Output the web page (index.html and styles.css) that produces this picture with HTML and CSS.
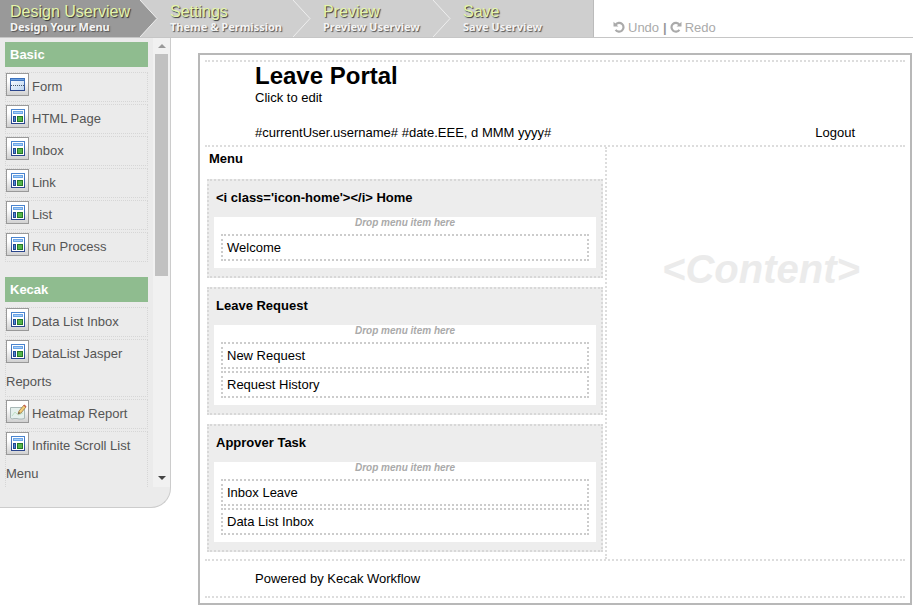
FILE: index.html
```html
<!DOCTYPE html>
<html lang="en">
<head>
<meta charset="utf-8">
<title>Userview Builder</title>
<link rel="stylesheet" href="styles.css">
</head>
<body>
<svg class="defs" width="0" height="0">
  <defs>
    <linearGradient id="tile" x1="0" y1="0" x2="0" y2="1"><stop offset="0.35" stop-color="#fff"/><stop offset="1" stop-color="#cfcfcf"/></linearGradient>
    <linearGradient id="frame" x1="0" y1="0" x2="0" y2="1"><stop offset="0" stop-color="#4b85cf"/><stop offset="1" stop-color="#2a458c"/></linearGradient>
    <linearGradient id="pale" x1="0" y1="0" x2="1" y2="1"><stop offset="0" stop-color="#fff"/><stop offset="1" stop-color="#b9d3f0"/></linearGradient>
  </defs>
  <symbol id="page" viewBox="0 0 23 23">
    <rect x=".5" y=".5" width="22" height="22" fill="url(#tile)" stroke="#999"/>
    <rect x="5.5" y="4.5" width="13" height="14" fill="#fff" stroke="url(#frame)"/>
    <rect x="7" y="6" width="10" height="3" fill="#6aa5e8"/><rect x="8" y="7" width="8" height="1" fill="#a5cdf7"/>
    <rect x="7" y="11" width="3" height="6" fill="#24488f"/><rect x="8" y="12" width="1" height="4" fill="#4a87d2"/>
    <rect x="11" y="11" width="6" height="6" fill="#24772a"/><rect x="12" y="12" width="4" height="4" fill="#55b549"/>
  </symbol>
  <symbol id="form" viewBox="0 0 23 23">
    <rect x=".5" y=".5" width="22" height="22" fill="url(#tile)" stroke="#999"/>
    <rect x="4.5" y="5.5" width="14" height="12" fill="url(#pale)" stroke="url(#frame)"/>
    <rect x="4" y="5" width="15" height="3" fill="#3b71bd"/><rect x="5" y="6" width="13" height="1" fill="#6da1df"/>
    <path d="M5 12.5H18" stroke="#456" stroke-dasharray="1 1"/>
  </symbol>
  <symbol id="map" viewBox="0 0 23 23">
    <rect x=".5" y=".5" width="22" height="22" fill="url(#tile)" stroke="#999"/>
    <path d="M4.5 7.5H18.5V18.5L16 19H13L11 18.5H8L6 19L4.5 18Z" fill="#e5f0ed" stroke="#a9b8b7"/>
    <path d="M6 16L9 12L12 15L17 13" fill="none" stroke="#bfe0c5"/>
    <path d="M12 14L13 11L18 5L20 7L15 13Z" fill="#f3cf78" stroke="#9a7945" stroke-width=".8"/>
    <path d="M18 5L20 7" stroke="#c65b4e" stroke-width="1.5"/><path d="M12 14L13 12L14 13Z" fill="#444"/>
  </symbol>
  <symbol id="turn" viewBox="0 0 12 12">
    <path d="M2.6 3.6A4.4 4.4 0 1 1 2.6 8.9" fill="none" stroke="#aaa" stroke-width="2.2"/>
    <path d="M.5 .8V5.5H5.4Z" fill="#aaa"/>
  </symbol>
</svg>
<header class="topbar">
  <nav class="steps">
    <a class="step active"><b>Design Userview</b><small>Design Your Menu</small><svg class="arrow" viewBox="0 0 20 37"><path d="M0 0L17 18.5L0 37Z" fill="#999"/><path d="M0 0L17 18.5L0 37" fill="none" stroke="#eee"/></svg></a>
    <a class="step theme"><b>Settings</b><small>Theme &amp; Permission</small><svg class="arrow" viewBox="0 0 20 37"><path d="M0 0L17 18.5L0 37" fill="none" stroke="#eee"/></svg></a>
    <a class="step preview"><b>Preview</b><small>Preview Userview</small><svg class="arrow" viewBox="0 0 20 37"><path d="M0 0L17 18.5L0 37" fill="none" stroke="#eee"/></svg></a>
    <a class="step save"><b>Save</b><small>Save Userview</small></a>
  </nav>
  <div class="history"><svg class="turn"><use href="#turn"/></svg><span class="undo">Undo</span><span class="bar">|</span><svg class="turn redo"><use href="#turn"/></svg><span>Redo</span></div>
</header>
<div class="workspace">
  <aside class="palette">
    <div class="scroller">
      <div class="list">
        <h2>Basic</h2>
        <div class="tool"><svg><use href="#form"/></svg>Form</div>
        <div class="tool"><svg><use href="#page"/></svg>HTML Page</div>
        <div class="tool"><svg><use href="#page"/></svg>Inbox</div>
        <div class="tool"><svg><use href="#page"/></svg>Link</div>
        <div class="tool"><svg><use href="#page"/></svg>List</div>
        <div class="tool"><svg><use href="#page"/></svg>Run Process</div>
        <h2 class="next">Kecak</h2>
        <div class="tool"><svg><use href="#page"/></svg>Data List Inbox</div>
        <div class="tool"><svg><use href="#page"/></svg>DataList Jasper<br>Reports</div>
        <div class="tool"><svg><use href="#map"/></svg>Heatmap Report</div>
        <div class="tool"><svg><use href="#page"/></svg>Infinite Scroll List<br>Menu</div>
      </div>
      <div class="scrollbar"><i class="up"></i><i class="thumb"></i><i class="down"></i></div>
    </div>
  </aside>
  <main class="canvas">
    <header class="page-head">
      <h1>Leave Portal</h1>
      <p class="desc">Click to edit</p>
      <div class="user"><span>#currentUser.username# #date.EEE, d MMM yyyy#</span><span>Logout</span></div>
    </header>
    <div class="page-body">
      <section class="menu">
        <h3>Menu</h3>
        <div class="category"><h4>&lt;i class='icon-home'&gt;&lt;/i&gt; Home</h4><div class="drop"><em>Drop menu item here</em><div class="item">Welcome</div></div></div>
        <div class="category"><h4>Leave Request</h4><div class="drop"><em>Drop menu item here</em><div class="item">New Request</div><div class="item">Request History</div></div></div>
        <div class="category"><h4>Approver Task</h4><div class="drop"><em>Drop menu item here</em><div class="item">Inbox Leave</div><div class="item">Data List Inbox</div></div></div>
      </section>
      <section class="content">&lt;Content&gt;</section>
    </div>
    <footer class="page-foot">Powered by Kecak Workflow</footer>
  </main>
</div>
</body>
</html>
```
FILE: styles.css
```css
* { box-sizing: border-box; }
body { margin: 0; width: 913px; height: 607px; overflow: hidden; background: #fff; color: #000; font: 13px/15px "Liberation Sans", Arial, sans-serif; }
h1, h2, h3, h4, p { margin: 0; }
.defs { display: block; height: 0; }
.topbar { display: flex; height: 38px; border-bottom: 1px solid #c6c6c6; }
.steps { display: flex; width: 594px; background: #cfcfcf; border-right: 1px solid #bbb; }
.step { position: relative; padding: 3px 0 0 10px; color: #fff; }
.step.active { width: 160px; background: linear-gradient(90deg, #999 140px, #cfcfcf 140px); }
.theme { width: 153px; }
.preview { width: 140px; }
.step b { display: block; font-weight: 400; font-size: 16px; line-height: 18px; color: #e5f5aa; text-shadow: 1px 1px 1px #333; }
.step small { display: block; margin-top: -1px; font: bold 11px/13px "Noto Sans", sans-serif; color: #f4f4f4; text-shadow: 1px 1px 1px #555; }
.arrow { position: absolute; right: 0; top: 0; width: 20px; height: 37px; }
.history { display: flex; padding: 20px 0 0 19px; color: #aaa; }
.turn { width: 12px; height: 12px; margin: 1px 3px 0 0; }
.turn.redo { transform: scaleX(-1); }
.bar { margin: 0 3px 0 4px; font-weight: bold; color: #999; }
.workspace { display: flex; align-items: flex-start; }
.palette { width: 171px; height: 470px; background: #ebebeb; border: solid #ccc; border-width: 0 1px 1px 0; border-radius: 0 0 20px 0; color: #555; }
.scroller { display: flex; height: 449px; overflow: hidden; }
.list { width: 153px; padding: 4px 5px 0; }
.list h2 { height: 25px; margin-bottom: 5px; padding-left: 5px; background: #8fbc8f; color: #fff; font-size: 13px; line-height: 25px; }
.list .next { margin-top: 15px; }
.tool { border: 1px dotted #d6d6d6; margin-bottom: 2px; line-height: 28px; white-space: nowrap; }
.tool svg { width: 23px; height: 23px; vertical-align: top; margin: 0 3px 0 0; }
.scrollbar { display: flex; flex-direction: column; align-items: center; width: 17px; background: #f1f1f1; }
.up { border: 4px solid transparent; border-bottom-color: #999; border-top: 0; margin: 6px 0; }
.thumb { width: 13px; height: 222px; background: #c1c1c1; }
.down { margin: auto 0 7px; border: 4px solid transparent; border-top-color: #444; border-bottom: 0; }
.canvas { width: 714px; height: 552px; margin: 15px 0 0 27px; padding: 5px; border: 2px solid #b8b8b8; }
.page-head { height: 87px; padding: 0 50px; border: dotted #ddd; border-width: 2px 0; }
.page-head h1 { font-size: 24px; line-height: 28px; }
.desc { margin-bottom: 20px; }
.user { display: flex; justify-content: space-between; }
.page-body { display: flex; height: 412px; }
.menu { width: 402px; padding: 0 2px; border-right: 2px dotted #ddd; }
.menu h3 { height: 32px; padding: 4px 2px 0; font-size: 13px; }
.category { margin-bottom: 9px; padding: 0 5px 8px; background: #ededed; border: 2px dotted #d8d8d8; }
.category h4 { height: 36px; padding: 9px 2px 0; font-size: 13px; }
.drop { padding: 0 7px 5px; background: #fff; }
.drop em { display: block; height: 17px; font-size: 10px; line-height: 12px; font-weight: bold; color: #aaa; text-align: center; }
.item { height: 27px; margin-bottom: 2px; padding: 4px; border: 2px dotted #ccc; }
.content { flex: 1; padding: 99px 0 0 10px; text-align: center; color: #ebebeb; font: italic bold 40px/46px "Liberation Sans", Arial, sans-serif; }
.page-foot { height: 39px; padding: 10px 50px 0; border: dotted #ddd; border-width: 2px 0; }
```
